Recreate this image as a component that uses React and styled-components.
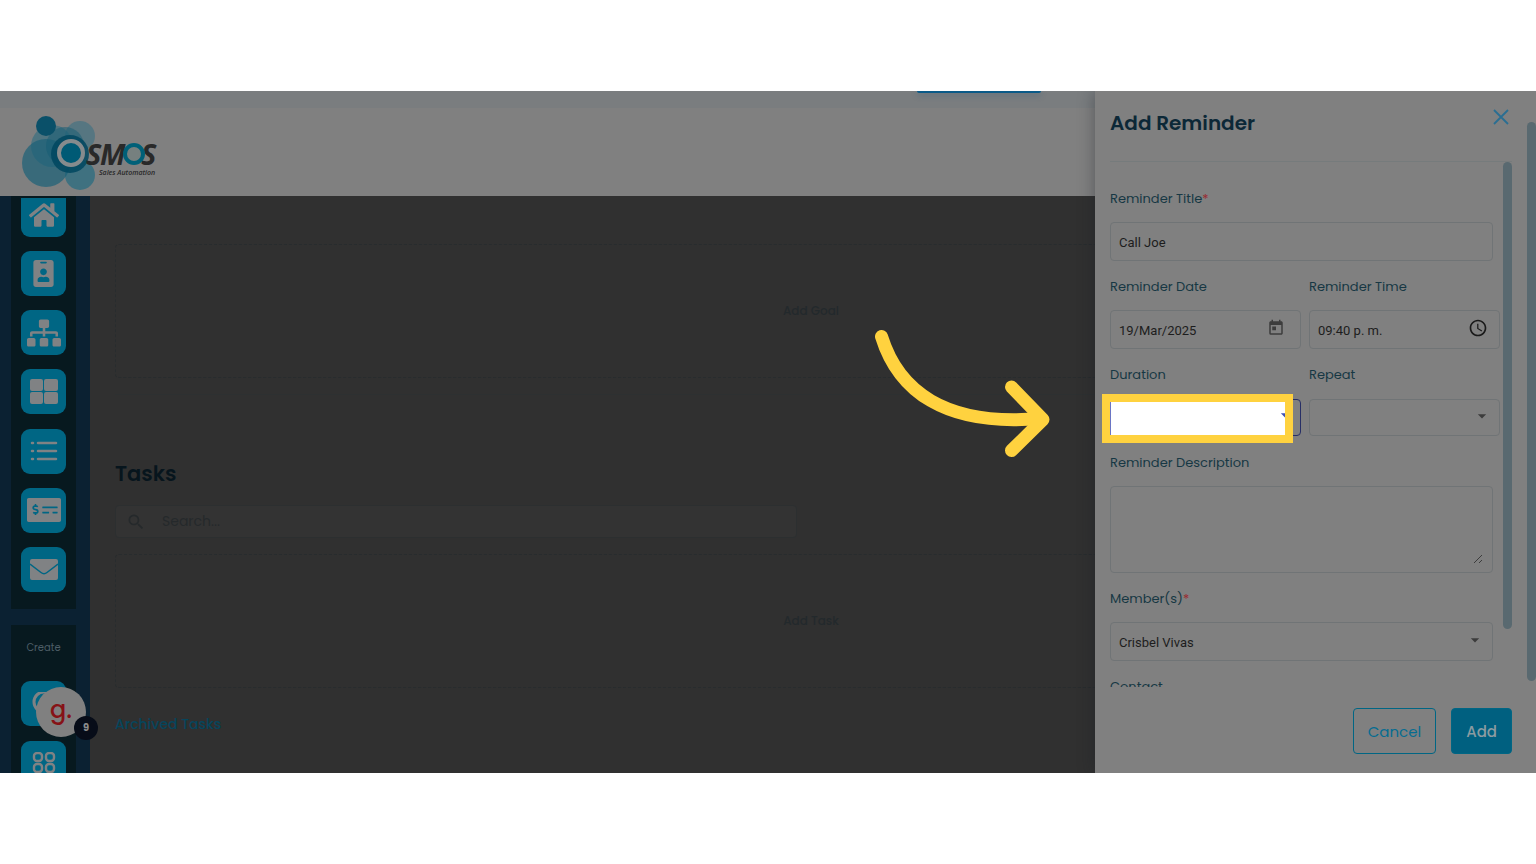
import React from "react";
import styled, { createGlobalStyle, css } from "styled-components";
import { FaHome, FaIdBadge, FaSitemap, FaMoneyCheckAlt } from "react-icons/fa";
import { MdToday, MdAccessTime, MdSearch, MdArrowDropDown } from "react-icons/md";

const GlobalStyle = createGlobalStyle`
  *, *::before, *::after { box-sizing: border-box; }
  body { margin: 0; background: #fff; font-family: Poppins, Inter, sans-serif; }
  button, input, select, textarea { font: inherit; margin: 0; }
`;

const Page = styled.div`
  display: flex;
  flex-direction: column;
  height: 100vh;
  min-height: 640px;
  padding: 91px 0;
`;

const Stage = styled.div`
  position: relative;
  display: flex;
  flex-direction: column;
  flex: 1;
  min-height: 0;
  overflow: hidden;
  background: #303030;
`;

const TopStrip = styled.div`
  flex: none;
  height: 17px;
  padding-right: 495px;
  display: flex;
  justify-content: flex-end;
  background: #7a7d7f;
`;

const TopTab = styled.div`
  width: 124px;
  height: 2px;
  border-radius: 0 0 3px 3px;
  background: #0a5a88;
  box-shadow: 0 2px 6px rgba(20, 80, 120, 0.45);
`;

const Header = styled.header`
  flex: none;
  height: 88px;
  padding: 4px 20px;
  background: #808080;
`;

const Body = styled.div`
  display: flex;
  flex: 1;
  min-height: 0;
`;

const Sidebar = styled.nav`
  flex: none;
  display: flex;
  flex-direction: column;
  gap: 16px;
  width: 90px;
  padding: 0 14px 0 11px;
  background: #0b2132;
`;

const NavPanel = styled.div`
  flex: none;
  display: flex;
  flex-direction: column;
  align-items: center;
  background: #07191f;
  ${(p) =>
    p.$create
      ? css`
          gap: 15px;
          height: 180px;
          padding-top: 13px;
        `
      : css`
          justify-content: space-between;
          height: 413px;
          padding: 2px 0 17px;
        `}
`;

const NavCaption = styled.span`
  height: 28px;
  font-size: 10px;
  line-height: 20px;
  color: #4d5d66;
`;

const Tile = styled.button`
  position: relative;
  flex: none;
  display: flex;
  align-items: center;
  justify-content: center;
  width: 45px;
  height: ${(p) => (p.$cut ? 39 : 45)}px;
  padding: ${(p) => (p.$cut ? "0 0 6px" : "0")};
  border: 0;
  border-radius: ${(p) => (p.$cut ? "0 0 9px 9px" : "9px")};
  background: #006684;
  color: #808284;
`;

const Guide = styled.span`
  position: absolute;
  left: 15px;
  top: 6px;
  width: 50px;
  height: 50px;
  border-radius: 50%;
  background: #808080;
  color: #861216;
  font-size: 24px;
  font-weight: 500;
  line-height: 46px;
  text-align: center;
`;

const Count = styled.span`
  position: absolute;
  right: -12px;
  bottom: -3px;
  width: 24px;
  height: 24px;
  border-radius: 50%;
  background: #070c18;
  color: #8a8a8a;
  font-size: 10px;
  font-weight: 700;
  line-height: 24px;
`;

const Main = styled.main`
  flex: 1;
  min-width: 0;
  padding: 48px 29px 0 25px;
`;

const DashedBox = styled.button`
  display: block;
  width: 100%;
  height: 134px;
  border: 1px dashed #282c2e;
  border-radius: 4px;
  background: none;
  color: #23292c;
  font-size: 12px;
  font-weight: 500;
`;

const GoalSection = styled.section`
  margin-right: -29px;
  padding: 0 29px 16px 0;
  border-bottom: 1px solid #2d3031;
`;

const SectionTitle = styled.h2`
  margin: 64px 0 16px;
  font-size: 21px;
  font-weight: 600;
  line-height: 30px;
  color: #07151d;
`;

const SearchBox = styled.label`
  display: flex;
  align-items: center;
  gap: 16px;
  width: 49%;
  height: 33px;
  margin-bottom: 16px;
  padding: 0 10px;
  border: 1px solid #2c2f30;
  border-radius: 4px;
  background: #333;
  color: #25292b;
  input {
    flex: 1;
    min-width: 0;
    padding: 0;
    border: 0;
    background: none;
    font-size: 14px;
  }
  input::placeholder { color: #25292b; opacity: 1; }
`;

const ArchiveLink = styled.a`
  display: inline-block;
  margin-top: 25px;
  font-size: 14px;
  font-weight: 500;
  line-height: 22px;
  color: #06455c;
  text-decoration: none;
`;

const Drawer = styled.aside`
  position: absolute;
  top: 0;
  right: 0;
  bottom: 0;
  display: flex;
  gap: 15px;
  width: 441px;
  padding-left: 15px;
  background: #808080;
  box-shadow: 0 0 16px rgba(22, 28, 36, 0.4);
`;

const DrawerContent = styled.div`
  display: flex;
  flex-direction: column;
  flex: 1;
  min-width: 0;
`;

const DrawerHead = styled.div`
  flex: none;
  display: flex;
  justify-content: space-between;
  height: 71px;
  padding: 17px 3px 0 0;
  border-bottom: 1px solid #767b7c;
`;

const DrawerTitle = styled.h1`
  margin: 0;
  font-size: 20px;
  font-weight: 600;
  line-height: 30px;
  color: #0c2837;
`;

const CloseButton = styled.button`
  display: flex;
  width: 16px;
  height: 18px;
  padding: 1px 0 0;
  border: 0;
  background: none;
  color: #2a6e92;
`;

const ScrollArea = styled.div`
  flex: 1;
  min-height: 0;
  display: flex;
  justify-content: space-between;
  margin-left: -15px;
  padding-left: 15px;
  overflow: hidden;
`;

const Thumb = styled.div`
  flex: none;
  width: 9px;
  height: ${(p) => p.$size};
  margin-top: ${(p) => (p.$outer ? 31 : 0)}px;
  border-radius: 5px;
  background: #596970;
`;

const Form = styled.form`
  display: grid;
  grid-template-columns: 191px 191px;
  gap: 16px 8px;
  align-content: start;
  padding-top: 27px;
`;

const Field = styled.div`
  display: flex;
  flex-direction: column;
  gap: 13px;
  ${(p) => p.$wide && "grid-column: 1 / -1; margin-right: 7px;"}
`;

const Label = styled.label`
  font-size: 13px;
  line-height: 20px;
  color: #173844;
  span { color: #9a2a30; }
`;

const Control = styled.div`
  position: relative;
  display: flex;
  svg { pointer-events: none; }
`;

const controlStyle = css`
  width: 100%;
  height: 39px;
  padding: 2px 8px 0;
  border: 1px solid ${(p) => (p.$focus ? "#272f66" : "#707476")};
  border-radius: 4px;
  outline: 0;
  background: transparent;
  color: #1d1d1d;
  font-family: Roboto, sans-serif;
  font-size: 13px;
`;
const TextInput = styled.input`${controlStyle}`;
const Select = styled.select`
  ${controlStyle}
  height: ${(p) => (p.$low ? 37 : 39)}px;
  margin: ${(p) => (p.$low ? "1px 0" : "0")};
  appearance: none;
`;
const TextArea = styled.textarea`
  ${controlStyle}
  height: 87px;
  resize: none;
`;

const Adornment = styled.span`
  position: absolute;
  top: ${(p) => p.$top}px;
  right: ${(p) => p.$right}px;
  display: flex;
  color: ${(p) => p.$color || "#3c3c3c"};
  pointer-events: none;
`;

const Highlight = styled.span`
  position: absolute;
  left: -8px;
  top: -4px;
  width: 191px;
  height: 49px;
  overflow: hidden;
  border: 8px solid #ffd23f;
  background: #fff;
  box-shadow: inset 1px 0 #6a75c4;
  color: #3f51b5;
  pointer-events: none;
`;

const HighlightCaret = styled.span`
  position: absolute;
  top: 3px;
  right: -10px;
  display: flex;
`;

const Footer = styled.div`
  flex: none;
  display: flex;
  justify-content: flex-end;
  gap: 15px;
  height: 86px;
  padding-top: 21px;
`;

const Action = styled.button`
  height: 46px;
  padding: 0 14px;
  border: 1px solid #006684;
  border-radius: 4px;
  background: ${(p) => (p.$solid ? "#006080" : "transparent")};
  color: ${(p) => (p.$solid ? "#8b9ba1" : "#066c91")};
  font-size: 15px;
  font-weight: ${(p) => (p.$solid ? 500 : 400)};
`;

const Arrow = styled.svg`
  position: absolute;
  top: 235px;
  right: 484px;
`;

function Logo() {
  return (
    <svg width="140" height="80" viewBox="20 111 140 80" role="img" aria-label="Osmos Sales Automation">
      <circle cx="80" cy="135" r="15" fill="#3a7082" opacity="0.6" />
      <circle cx="80" cy="174" r="15" fill="#2a6c80" opacity="0.75" />
      <circle cx="52" cy="145" r="21" fill="#2d6c80" opacity="0.6" />
      <circle cx="46" cy="162" r="24" fill="#1b6178" opacity="0.7" />
      <circle cx="65" cy="145" r="19" fill="#145c74" opacity="0.5" />
      <circle cx="46" cy="125" r="10" fill="#0a5069" />
      <circle cx="70" cy="153" r="19" fill="#00465f" opacity="0.85" />
      <ellipse cx="71" cy="152" rx="12" ry="12" fill="#005a75" stroke="#868b8d" strokeWidth="4" />
      <g fill="#292929" fontFamily="'Open Sans', sans-serif" fontWeight="700" fontStyle="italic" fontSize="29">
        <text x="86" y="164">S</text>
        <text x="100" y="164">M</text>
        <text x="141" y="164">S</text>
      </g>
      <ellipse cx="134" cy="153" rx="9" ry="9" fill="#76807f" stroke="#006078" strokeWidth="4" />
      <text x="99" y="174" fill="#292929" fontFamily="'Open Sans', sans-serif" fontWeight="600" fontStyle="italic" fontSize="7">
        Sales Automation
      </text>
    </svg>
  );
}

const BoardIcon = () => (
  <svg width="28" height="25" viewBox="0 0 28 25" fill="currentColor">
    <rect width="13" height="12" rx="2" />
    <rect x="14" width="14" height="12" rx="2" />
    <rect y="13" width="13" height="12" rx="2" />
    <rect x="14" y="13" width="14" height="12" rx="2" />
  </svg>
);

const ListIcon = () => (
  <svg width="28" height="22" viewBox="0 0 28 22" stroke="currentColor" strokeWidth="2.500" strokeLinecap="round">
    <path d="M2 3h1M8 3h18M2 11h1M8 11h18M2 19h1M8 19h18" />
  </svg>
);

const MailIcon = () => (
  <svg width="28" height="21" viewBox="0 0 28 21" fill="none">
    <rect width="28" height="21" rx="2" fill="currentColor" />
    <path d="M0 5l11 8.500q3 2.500 6 0l11-8.500" stroke="#006684" strokeWidth="1.500" />
  </svg>
);

const SquaresIcon = () => (
  <svg width="24" height="24" viewBox="0 0 24 24" fill="none" stroke="currentColor" strokeWidth="2.400">
    <rect x="2" y="1" width="8" height="8" rx="3" />
    <rect x="14" y="1" width="8" height="8" rx="3" />
    <rect x="2" y="12" width="8" height="8" rx="3" />
    <rect x="14" y="12" width="8" height="8" rx="3" />
  </svg>
);

const RingIcon = () => (
  <svg width="24" height="24" viewBox="0 0 24 24" fill="none" stroke="currentColor" strokeWidth="3">
    <circle cx="12" cy="10" r="10" />
  </svg>
);

const navItems = [
  ["Home", <FaHome size={30} />],
  ["Contacts", <FaIdBadge size={27} />],
  ["Organization", <FaSitemap size={34} />],
  ["Boards", <BoardIcon />],
  ["Lists", <ListIcon />],
  ["Payments", <FaMoneyCheckAlt size={34} />],
  ["Mail", <MailIcon />],
];

export default function App() {
  return (
    <Page>
      <GlobalStyle />
      <Stage>
        <TopStrip>
          <TopTab />
        </TopStrip>
        <Header>
          <Logo />
        </Header>
        <Body>
          <Sidebar>
            <NavPanel>
              {navItems.map(([name, icon], i) => (
                <Tile key={name} $cut={i === 0} aria-label={name}>
                  {icon}
                </Tile>
              ))}
            </NavPanel>
            <NavPanel $create>
              <NavCaption>Create</NavCaption>
              <Tile aria-label="Guide">
                <RingIcon />
                <Guide>
                  g.
                  <Count>9</Count>
                </Guide>
              </Tile>
              <Tile aria-label="Apps">
                <SquaresIcon />
              </Tile>
            </NavPanel>
          </Sidebar>
          <Main>
            <GoalSection>
              <DashedBox>Add Goal</DashedBox>
            </GoalSection>
            <SectionTitle>Tasks</SectionTitle>
            <SearchBox>
              <MdSearch size={20} />
              <input type="search" placeholder="Search..." aria-label="Search tasks" />
            </SearchBox>
            <DashedBox>Add Task</DashedBox>
            <ArchiveLink href="#archived">Archived Tasks</ArchiveLink>
          </Main>
        </Body>

        <Drawer>
          <DrawerContent>
            <DrawerHead>
              <DrawerTitle>Add Reminder</DrawerTitle>
              <CloseButton aria-label="Close">
                <svg width="16" height="16" viewBox="0 0 16 16" stroke="currentColor" strokeWidth="1.800">
                  <path d="M1 1l14 14M15 1L1 15" />
                </svg>
              </CloseButton>
            </DrawerHead>
            <ScrollArea>
              <Form>
                <Field $wide>
                  <Label htmlFor="title">Reminder Title<span>*</span></Label>
                  <TextInput id="title" defaultValue="Call Joe" />
                </Field>
                <Field>
                  <Label htmlFor="date">Reminder Date</Label>
                  <Control>
                    <TextInput id="date" defaultValue="19/Mar/2025" />
                    <Adornment $top={9} $right={16}><MdToday size={18} /></Adornment>
                  </Control>
                </Field>
                <Field>
                  <Label htmlFor="time">Reminder Time</Label>
                  <Control>
                    <TextInput id="time" defaultValue="09:40 p. m." />
                    <Adornment $top={8} $right={12} $color="#1a1a1a"><MdAccessTime size={20} /></Adornment>
                  </Control>
                </Field>
                <Field>
                  <Label htmlFor="duration">Duration</Label>
                  <Control>
                    <Select id="duration" $low $focus />
                    <Highlight>
                      <HighlightCaret><MdArrowDropDown size={20} /></HighlightCaret>
                    </Highlight>
                  </Control>
                </Field>
                <Field>
                  <Label htmlFor="repeat">Repeat</Label>
                  <Control>
                    <Select id="repeat" $low />
                    <Adornment $top={8} $right={8}><MdArrowDropDown size={20} /></Adornment>
                  </Control>
                </Field>
                <Field $wide>
                  <Label htmlFor="description">Reminder Description</Label>
                  <Control>
                    <TextArea id="description" />
                    <Adornment $top={68} $right={10}>
                      <svg width="10" height="10" viewBox="0 0 10 10" stroke="currentColor">
                        <path d="M1 9l8-8M6 9l3-3" />
                      </svg>
                    </Adornment>
                  </Control>
                </Field>
                <Field $wide>
                  <Label htmlFor="members">Member(s)<span>*</span></Label>
                  <Control>
                    <Select id="members">
                      <option>Crisbel Vivas</option>
                    </Select>
                    <Adornment $top={8} $right={8}><MdArrowDropDown size={20} /></Adornment>
                  </Control>
                </Field>
                <Field $wide>
                  <Label as="span">Contact</Label>
                </Field>
              </Form>
              <Thumb $size="89%" />
            </ScrollArea>
            <Footer>
              <Action type="button">Cancel</Action>
              <Action type="button" $solid>Add</Action>
            </Footer>
          </DrawerContent>
          <Thumb $size="82%" $outer />
        </Drawer>

        <Arrow width="180" height="136" viewBox="872 326 180 136" fill="none" stroke="#ffd23f" strokeWidth="13" strokeLinecap="round" strokeLinejoin="round" aria-hidden="true">
          <path d="M881.500 336.500C898 390 944 427 1040 418.500" />
          <path d="M1011.500 387L1043 419.500L1011.500 450.500" />
        </Arrow>
      </Stage>
    </Page>
  );
}
